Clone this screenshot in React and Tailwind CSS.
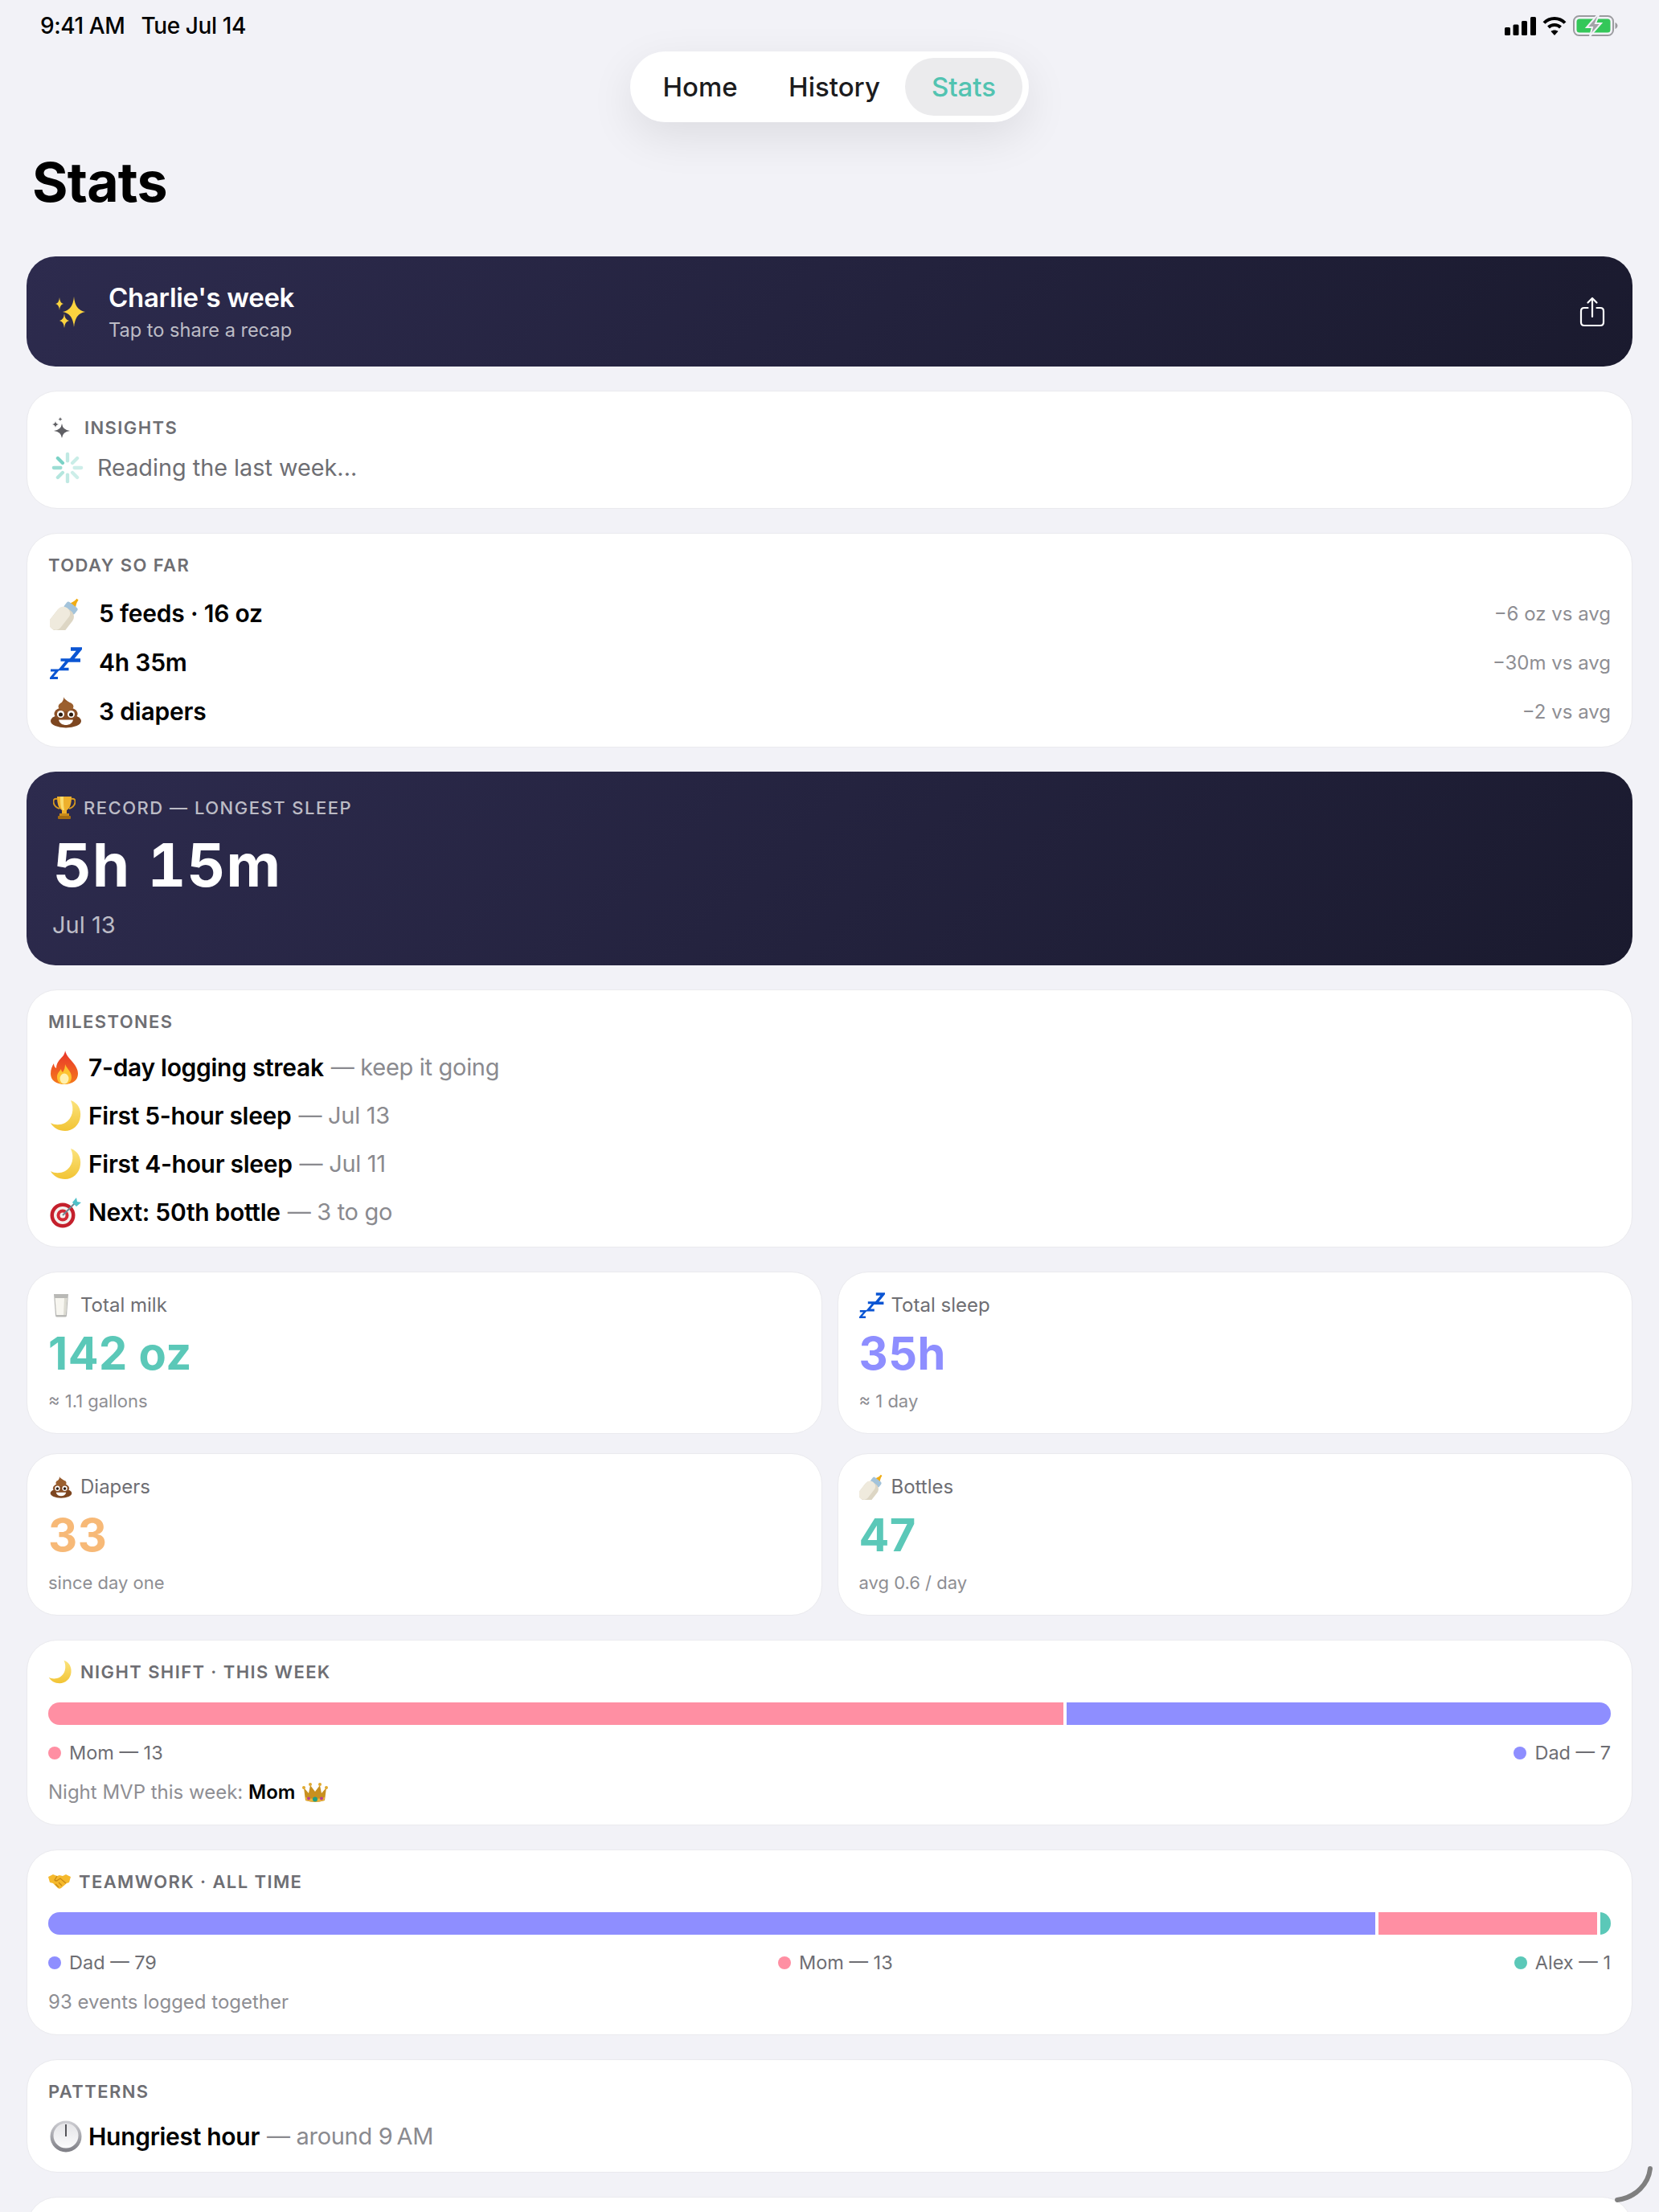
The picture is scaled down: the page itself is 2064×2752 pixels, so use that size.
import React from 'react';

const FONT = "font-['Inter','Noto_Sans',sans-serif]";

// four point star, used by the sparkle icons
const star = (cx, cy, rx, ry = rx) =>
  `M${cx} ${cy - ry}Q${cx + rx * 0.1} ${cy - ry * 0.1} ${cx + rx} ${cy}Q${cx + rx * 0.1} ${cy + ry * 0.1} ${cx} ${cy + ry}Q${cx - rx * 0.1} ${cy + ry * 0.1} ${cx - rx} ${cy}Q${cx - rx * 0.1} ${cy - ry * 0.1} ${cx} ${cy - ry}Z`;

const Sparkles = () => (
  <svg width="40" height="40" viewBox="0 0 40 40">
    <path d={star(26, 20, 14, 19)} fill="#fbd33f" />
    <path d={star(8, 10, 5, 8)} fill="#fbd33f" />
    <path d={star(14, 31, 6, 9)} fill="#fbd33f" />
  </svg>
);

const GraySparkle = () => (
  <svg width="22" height="26" viewBox="0 0 22 26" className="block">
    <path d={star(12, 17, 10, 9)} fill="#5f5f64" />
    <path d={star(4, 9, 4)} fill="#5f5f64" />
    <path d={star(10, 2.5, 2.5)} fill="#5f5f64" />
  </svg>
);

const Spinner = () => (
  <svg width="40" height="40" viewBox="0 0 42 42" stroke="#5bc8b8" strokeWidth="4.5" strokeLinecap="round">
    <line x1="21" y1="3" x2="21" y2="12" opacity="0.38" />
    <line x1="33.7" y1="8.3" x2="27.4" y2="14.6" opacity="0.32" />
    <line x1="39" y1="21" x2="30" y2="21" opacity="0.3" />
    <line x1="33.7" y1="33.7" x2="27.4" y2="27.4" opacity="0.3" />
    <line x1="21" y1="39" x2="21" y2="30" opacity="0.38" />
    <line x1="8.3" y1="33.7" x2="14.6" y2="27.4" opacity="0.45" />
    <line x1="3" y1="21" x2="12" y2="21" opacity="0.6" />
    <line x1="8.3" y1="8.3" x2="14.6" y2="14.6" opacity="0.8" />
  </svg>
);

const Bottle = ({ size = 40 }) => (
  <svg width={size} height={size} viewBox="0 0 40 40">
    <g transform="translate(-1 -3) scale(1.1) rotate(38 20 20)">
      <path d="M16 10c0-3 2.500-3.500 2.800-10h2.400c.3 6.500 2.800 7 2.800 10z" fill="#f0ac14" />
      <rect x="12.500" y="8" width="15" height="9" rx="2.500" fill="#a3c3da" />
      <rect x="9.500" y="15" width="21" height="29" rx="8" fill="#ddd6c4" />
      <rect x="9.500" y="15" width="15" height="29" rx="7" fill="#efeadd" />
    </g>
  </svg>
);

const Zzz = ({ size = 40 }) => (
  <svg width={size} height={size} viewBox="0 0 40 40" fill="none" stroke="#0b55d3" strokeLinejoin="miter">
    <path d="M1 29h8.500l-8 9.500H10" strokeWidth="3" />
    <path d="M13.500 16h9.500l-9.500 11.500h10" strokeWidth="3.600" />
    <path d="M26 2.500h11.500L26 16.500h12" strokeWidth="4.400" />
  </svg>
);

const Poop = ({ size = 40 }) => (
  <svg width={size} height={size} viewBox="0 0 40 40">
    <path d="M17 1c1 4 9 6 10 11H13c-1-3 5-5 4-11z" fill="#95592b" />
    <ellipse cx="20" cy="31" rx="19" ry="8.500" fill="#7d4620" />
    <ellipse cx="20" cy="22" rx="14.500" ry="8.500" fill="#8a4f26" />
    <ellipse cx="20" cy="13" rx="9.500" ry="6" fill="#9b5f2e" />
    <circle cx="13.500" cy="22.500" r="4.500" fill="#fff" />
    <circle cx="26.500" cy="22.500" r="4.500" fill="#fff" />
    <circle cx="13.500" cy="23" r="2.500" fill="#2b1a0e" />
    <circle cx="26.500" cy="23" r="2.500" fill="#2b1a0e" />
    <path d="M11 29.500h18c-1 4.500-5 6.500-9 6.500s-8-2-9-6.500z" fill="#fff" />
  </svg>
);

const Fire = () => (
  <svg width="36" height="44" viewBox="0 0 36 44">
    <defs>
      <linearGradient id="fire" x1="0" y1="0" x2="0" y2="1">
        <stop offset="0" stopColor="#e8332a" />
        <stop offset="1" stopColor="#f57a1c" />
      </linearGradient>
    </defs>
    <path d="M19 1c2 7 5 9 9 14 4 5 7 9 7 15 0 8-7 13-17 13S1 38 1 30c0-6 2-10 4-13 0 3 1 5 3 6 0-8 6-12 9-16 1-2 2-4 2-6z" fill="url(#fire)" />
    <path d="M19 18c1 4 8 9 8 16 0 6-4 9-9 9s-9-3-9-9c0-5 3-7 5-10 0 2 1 3 2 4 2-3 3-6 3-10z" fill="#fdc22f" />
    <ellipse cx="18" cy="36" rx="5.500" ry="6.500" fill="#fff0b0" />
  </svg>
);

const Moon = ({ size = 40 }) => (
  <svg width={size} height={size} viewBox="0 0 40 40">
    <defs>
      <linearGradient id="moon" x1="0" y1="0" x2="0" y2="1">
        <stop offset="0" stopColor="#fbe37d" />
        <stop offset="1" stopColor="#f2c434" />
      </linearGradient>
    </defs>
    <path d="M26 1c9 3 13 11 12 20-1 11-10 18-19 18C11 39 4 35 1 29c5 3 12 3 18 0 9-5 12-17 7-28z" fill="url(#moon)" />
  </svg>
);

const Target = () => (
  <svg width="40" height="40" viewBox="0 0 40 40">
    <circle cx="16" cy="24" r="15.500" fill="#c4202c" />
    <circle cx="16" cy="24" r="11" fill="#f4f1ee" />
    <circle cx="16" cy="24" r="7.500" fill="#d22a35" />
    <circle cx="16" cy="24" r="3.500" fill="#f4f1ee" />
    <path d="M16 24 31 9" stroke="#6e8792" strokeWidth="2" />
    <path d="M28 8l5-6 1 5 5 1-6 5z" fill="#4fc0c9" />
  </svg>
);

const Clock = () => (
  <svg width="40" height="40" viewBox="0 0 40 40">
    <defs>
      <linearGradient id="rim" x1="0" y1="0" x2="0" y2="1">
        <stop offset="0" stopColor="#cfcfd4" />
        <stop offset="1" stopColor="#7d7d84" />
      </linearGradient>
      <linearGradient id="face" x1="0" y1="0" x2="0" y2="1">
        <stop offset="0" stopColor="#e4e4e7" />
        <stop offset="1" stopColor="#fbfbfc" />
      </linearGradient>
    </defs>
    <circle cx="20" cy="20" r="19.500" fill="url(#rim)" />
    <circle cx="20" cy="19" r="15.500" fill="url(#face)" />
    <path d="M20 5v15" stroke="#55555a" strokeWidth="2" />
  </svg>
);

const Milk = () => (
  <svg width="22" height="30" viewBox="0 0 22 30">
    <path d="M2 1h18l-2 27q-.2 1.500-2 1.500H6q-1.800 0-2-1.500z" fill="#b9b9b6" />
    <path d="M3.500 6h15l-1.700 21H5.200z" fill="#f7f6f0" />
    <path d="M15 6h3.500l-1.700 21H14z" fill="#dcdbd2" />
  </svg>
);

const Trophy = () => (
  <svg width="28" height="30" viewBox="0 0 28 30">
    <path d="M5 4C0 3 0 7 1 10c1 3 4 5 7 6M23 4c5-1 5 3 4 6-1 3-4 5-7 6" fill="none" stroke="#d79a1f" strokeWidth="2" />
    <path d="M5 1h18c0 9-2 15-6 17v4h-6v-4C7 16 5 10 5 1z" fill="#eeb02c" />
    <path d="M9 1h4c0 7 0 11 1 17h-2C9 15 9 8 9 1z" fill="#fbdc6e" />
    <rect x="8" y="22" width="12" height="3" fill="#c98c1b" />
    <rect x="6" y="25" width="16" height="4" rx="1" fill="#a56d12" />
  </svg>
);

const Crown = () => (
  <svg width="32" height="26" viewBox="0 0 32 26">
    <path d="M2 7l6 7 2-10 6 8 6-8 2 10 6-7-2 16q-12 4-24 0z" fill="#c8901f" />
    <path d="M4 19q12 4 24 0l-.5 4q-11.500 3.500-23 0z" fill="#eab23a" />
    <circle cx="2" cy="7" r="2" fill="#e0a92f" />
    <circle cx="30" cy="7" r="2" fill="#e0a92f" />
    <circle cx="10" cy="3" r="2" fill="#e0a92f" />
    <circle cx="22" cy="3" r="2" fill="#e0a92f" />
    <circle cx="16" cy="21.500" r="3" fill="#1f9e84" />
    <circle cx="8" cy="20.500" r="2" fill="#b8408f" />
    <circle cx="24" cy="20.500" r="2" fill="#b8408f" />
  </svg>
);

const Handshake = () => (
  <svg width="28" height="20" viewBox="0 0 28 20">
    <path d="M0 4l6-3 5 2 3-1 4 1 4-2 6 3-2 7-3 1-7 6q-2 1.500-4 0L6 12 2 11z" fill="#f5b92d" />
    <path d="M11 3l-3 5q2 2 4 0l3-2 7 6M9 13l4 4M13 11l4 4" fill="none" stroke="#c98a16" strokeWidth="1.300" />
  </svg>
);

const Share = () => (
  <svg width="32" height="38" viewBox="0 0 32 38" fill="none" stroke="#fff" strokeWidth="2.200" strokeLinecap="round" strokeLinejoin="round">
    <path d="M16 2v23M10.500 7.500 16 2l5.500 5.500" />
    <path d="M10.500 14H6q-4 0-4 4v14q0 4 4 4h20q4 0 4-4V18q0-4-4-4h-4.500" />
  </svg>
);

const Signal = () => (
  <svg width="39" height="23" viewBox="0 0 39 23" fill="#000">
    <rect x="0" y="13" width="7" height="10" rx="1.500" />
    <rect x="10.500" y="9.500" width="7" height="13.500" rx="1.500" />
    <rect x="21" y="5" width="7" height="18" rx="1.500" />
    <rect x="32" y="0" width="7" height="23" rx="1.500" />
  </svg>
);

const Wifi = () => (
  <svg width="30" height="24" viewBox="0 0 30 24" fill="none" stroke="#000" strokeWidth="4">
    <path d="M2 8.500c7-7.500 19-7.500 26 0" />
    <path d="M7.500 14c4-4 11-4 15 0" />
    <path d="M15 24l-4.500-5c2.500-2 6.500-2 9 0z" fill="#000" stroke="none" />
  </svg>
);

const Battery = () => (
  <svg width="56" height="26" viewBox="0 0 56 26">
    <rect x="1" y="1" width="49" height="24" rx="6.500" fill="none" stroke="#9b9b9f" strokeWidth="2" />
    <rect x="4.500" y="4.500" width="42" height="17" rx="3.500" fill="#34c759" />
    <path d="M52.500 9c2 1 3 2.500 3 4s-1 3-3 4z" fill="#9b9b9f" />
    <path d="M30 0 17 15h7l-3 11 14-16h-7l4-10z" fill="#a3a3a7" stroke="#f2f2f7" strokeWidth="2" />
  </svg>
);

const Card = ({ className = '', children }) => (
  <div className={`rounded-[38px] border border-[#eaeaee] bg-white px-[26px] ${className}`}>{children}</div>
);

const Label = ({ children, className = '' }) => (
  <div className={`flex h-[30px] items-center text-[22px] font-semibold tracking-[1.4px] text-[#6e6e73] uppercase ${className}`}>
    {children}
  </div>
);

const TODAY = [
  { icon: <Bottle />, text: '5 feeds · 16 oz', diff: '−6 oz vs avg' },
  { icon: <Zzz />, text: '4h 35m', diff: '−30m vs avg' },
  { icon: <Poop />, text: '3 diapers', diff: '−2 vs avg' },
];

const MILESTONES = [
  { icon: <Fire />, bold: '7-day logging streak', rest: 'keep it going' },
  { icon: <Moon />, bold: 'First 5-hour sleep', rest: 'Jul 13' },
  { icon: <Moon />, bold: 'First 4-hour sleep', rest: 'Jul 11' },
  { icon: <Target />, bold: 'Next: 50th bottle', rest: '3 to go' },
];

const STATS = [
  [
    { icon: <Milk />, label: 'Total milk', value: '142 oz', color: 'text-[#5bc8b8]', sub: '≈ 1.1 gallons' },
    { icon: <Zzz size={32} />, label: 'Total sleep', value: '35h', color: 'text-[#8e8eff]', sub: '≈ 1 day' },
  ],
  [
    { icon: <Poop size={28} />, label: 'Diapers', value: '33', color: 'text-[#f7b977]', sub: 'since day one' },
    { icon: <Bottle size={32} />, label: 'Bottles', value: '47', color: 'text-[#5bc8b8]', sub: 'avg 0.6 / day' },
  ],
];

const Milestone = ({ icon, bold, rest }) => (
  <div className="flex h-[60px] items-center">
    <div className="flex w-[50px] shrink-0 items-center pl-[2px]">{icon}</div>
    <span className="text-[30px] font-semibold tracking-[-0.3px] text-black">{bold}</span>
    <span className="ml-[9px] text-[29px] tracking-[-0.3px] text-[#8a8a8f]">— {rest}</span>
  </div>
);

const Legend = ({ dot, text }) => (
  <div className="flex items-center gap-[10px] text-[23.5px] text-[#6e6e73]">
    <span className={`h-[16px] w-[16px] rounded-full ${dot}`} />
    {text}
  </div>
);

export default function App() {
  return (
    <div className={`relative h-[2752px] w-[2064px] overflow-hidden bg-[#f2f2f7] ${FONT}`}>
      <div className="flex h-[64px] items-center justify-between pl-[50px] pr-[51px]">
        <div className="flex gap-[20px] text-[28px] font-medium tracking-[-0.4px] text-black">
          <span>9:41 AM</span>
          <span>Tue Jul 14</span>
        </div>
        <div className="flex items-center gap-[8px]">
          <Signal />
          <Wifi />
          <Battery />
        </div>
      </div>

      <div className="flex justify-center">
        <div className="flex h-[88px] w-[496px] items-center rounded-full bg-white/95 p-[8px] text-[33px] font-medium shadow-[0_18px_56px_rgba(0,0,0,0.09)]">
          <span className="w-[158px] pt-[2px] text-center text-[#1c1c1e]">Home</span>
          <span className="w-[176px] pt-[2px] text-center text-[#1c1c1e]">History</span>
          <span className="flex h-[72px] w-[146px] items-center justify-center rounded-full bg-[#ebebed] pt-[2px] text-[#52c3b1]">Stats</span>
        </div>
      </div>

      <h1 className="mt-[34px] flex h-[80px] items-center pl-[40px] text-[68px] font-bold tracking-[-0.8px] text-black">Stats</h1>

      <div className="mt-[53px] flex flex-col gap-[30px] px-[33px]">
        <div className="flex h-[137px] items-center rounded-[36px] bg-[linear-gradient(135deg,#2d2b4e,#1a1a2e)] pl-[33px] pr-[34px] text-white">
          <Sparkles />
          <div className="ml-[29px] flex-1 pt-[3px]">
            <div className="flex h-[44px] items-center text-[33px] font-semibold tracking-[-0.3px]">Charlie's week</div>
            <div className="flex h-[36px] items-center text-[23.6px] text-white/70">Tap to share a recap</div>
          </div>
          <Share />
        </div>

        <Card className="pt-[30px] pb-[28px]">
          <Label>
            <span className="mr-[18px] ml-[5px]"><GraySparkle /></span>INSIGHTS
          </Label>
          <div className="mt-[13px] flex h-[44px] items-center gap-[17px] pl-[4px] text-[28.8px] text-[#6e6e73]">
            <Spinner />
            Reading the last week...
          </div>
        </Card>

        <Card className="pt-[24px] pb-[13px]">
          <Label>TODAY SO FAR</Label>
          <div className="mt-[15px]">
            {TODAY.map(row => (
              <div key={row.text} className="flex h-[61px] items-center">
                <div className="w-[63px] shrink-0 pl-[2px]">{row.icon}</div>
                <span className="flex-1 text-[30px] font-semibold tracking-[-0.2px] text-black">{row.text}</span>
                <span className="text-[24px] text-[#8e8e93]">{row.diff}</span>
              </div>
            ))}
          </div>
        </Card>

        <div className="rounded-[36px] bg-[linear-gradient(135deg,#2d2b4e,#1a1a2e)] px-[33px] py-[30px] text-white">
          <div className="flex h-[30px] items-center gap-[10px] text-[22px] font-medium tracking-[1.5px] text-white/70 uppercase">
            <Trophy />
            RECORD — LONGEST SLEEP
          </div>
          <div className="mt-[16px] flex h-[80px] items-center text-[74px] leading-none font-bold tracking-[1.2px] tabular-nums">5h 15m</div>
          <div className="mt-[15px] -ml-[1px] flex h-[40px] items-center text-[29px] text-white/70">Jul 13</div>
        </div>

        <Card className="pt-[24px] pb-[13px]">
          <Label>MILESTONES</Label>
          <div className="mt-[12px]">
            {MILESTONES.map(m => (
              <Milestone key={m.bold} {...m} />
            ))}
          </div>
        </Card>

        <div className="flex flex-col gap-[24px]">
          {STATS.map((pair, i) => (
            <div key={i} className="grid grid-cols-2 gap-[19px]">
              {pair.map(s => (
                <Card key={s.label} className="pt-[23px] pb-[25px]">
                  <div className="flex h-[36px] items-center gap-[8px] text-[24px] text-[#6e6e73]">
                    <span className="flex w-[32px] justify-center">{s.icon}</span>
                    {s.label}
                  </div>
                  <div className={`mt-[10px] flex h-[64px] items-center text-[56px] font-bold tracking-[0.5px] ${s.color}`}>{s.value}</div>
                  <div className="mt-[12px] flex h-[30px] items-center text-[22px] text-[#8e8e93]">{s.sub}</div>
                </Card>
              ))}
            </div>
          ))}
        </div>

        <Card className="pt-[24px] pb-[22px]">
          <Label className="gap-[10px]">
            <Moon size={30} />
            NIGHT SHIFT · THIS WEEK
          </Label>
          <div className="mt-[23px] flex h-[28px] overflow-hidden rounded-full">
            <div className="w-[65.2%] border-r-[4px] border-white bg-[#ff8fa3]" />
            <div className="flex-1 bg-[#8e8eff]" />
          </div>
          <div className="mt-[20px] flex h-[30px] items-center justify-between">
            <Legend dot="bg-[#ff8fa3]" text="Mom — 13" />
            <Legend dot="bg-[#8e8eff]" text="Dad — 7" />
          </div>
          <div className="mt-[16px] flex h-[36px] items-center text-[24px] text-[#8e8e93]">
            Night MVP this week:&nbsp;<span className="font-semibold text-black">Mom</span>
            <span className="ml-[9px]"><Crown /></span>
          </div>
        </Card>

        <Card className="pt-[24px] pb-[22px]">
          <Label className="gap-[10px]">
            <Handshake />
            TEAMWORK · ALL TIME
          </Label>
          <div className="mt-[23px] flex h-[28px] overflow-hidden rounded-full">
            <div className="w-[85.13%] border-r-[4px] border-white bg-[#8e8eff]" />
            <div className="w-[14.2%] border-r-[4px] border-white bg-[#ff8fa3]" />
            <div className="flex-1 bg-[#5bc8b8]" />
          </div>
          <div className="mt-[20px] flex h-[30px] items-center justify-between">
            <Legend dot="bg-[#8e8eff]" text="Dad — 79" />
            <Legend dot="bg-[#ff8fa3]" text="Mom — 13" />
            <Legend dot="bg-[#5bc8b8]" text="Alex — 1" />
          </div>
          <div className="mt-[16px] flex h-[36px] items-center text-[24px] text-[#8e8e93]">93 events logged together</div>
        </Card>

        <Card className="pt-[24px] pb-[14px]">
          <Label>PATTERNS</Label>
          <div className="mt-[11px]">
            <Milestone icon={<Clock />} bold="Hungriest hour" rest={'around 9\u2009AM'} />
          </div>
        </Card>

        <Card className="h-[100px]" />
      </div>

      {/* pointer corner from the capture */}
      <svg className="absolute left-[2006px] top-[2694px]" width="52" height="48" viewBox="0 0 52 48" fill="none">
        <path d="M47 4C45 22 30 40 6 43" stroke="#7f7f7f" strokeWidth="6" strokeLinecap="round" />
      </svg>
    </div>
  );
}
